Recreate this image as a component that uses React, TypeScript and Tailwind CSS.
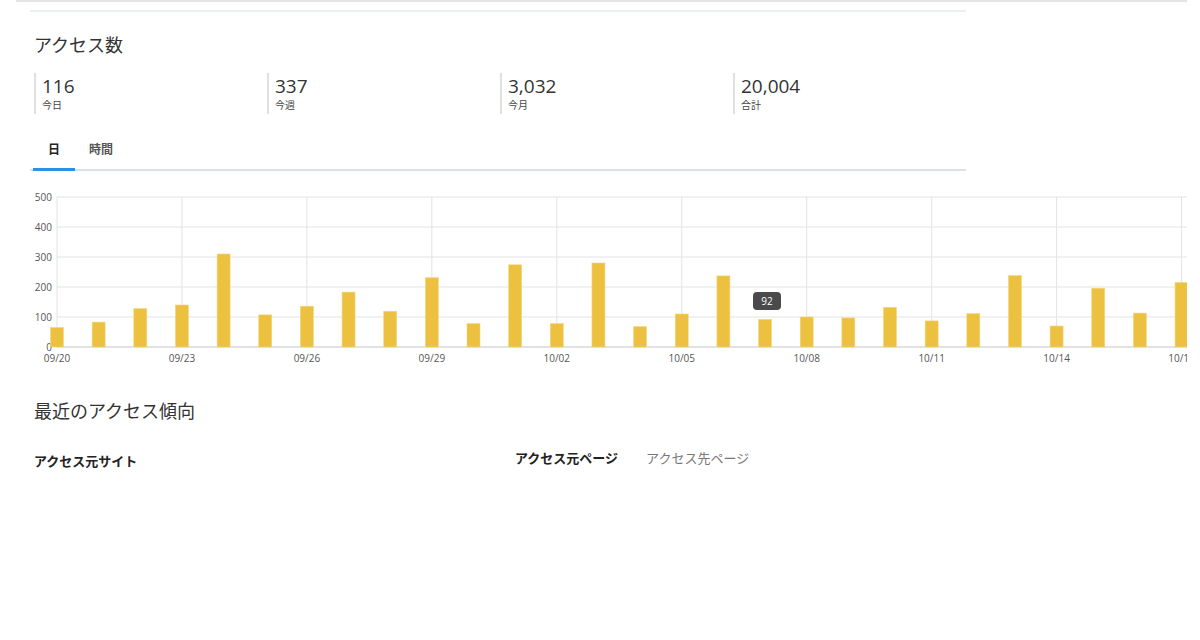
import React from "react";

const vals = [65,83,128,140,310,107,136,183,119,231,78,274,78,280,68,110,237,92,100,97,132,87,111,238,70,196,113,215];
const labels = ["09/20","09/23","09/26","09/29","10/02","10/05","10/08","10/11","10/14","10/17"];
const X0 = 27;
const DX = 41.65;
const Y0 = 158;

function Chart() {
  return (
    <svg width={1157} height={180} className="block" style={{ fontFamily: '"Open Sans","Liberation Sans",sans-serif' }}>
      {[0, 1, 2, 3, 4, 5].map((i) => (
        <line key={i} x1={X0} x2={1157} y1={Y0 - i * 30} y2={Y0 - i * 30} stroke={i === 0 ? "#d9d9d9" : "#ececec"} strokeWidth={1.5} />
      ))}
      {labels.map((_, i) => (
        <line key={i} x1={X0 + i * 3 * DX} x2={X0 + i * 3 * DX} y1={Y0 - 150} y2={Y0} stroke="#e3e3e3" strokeWidth={1} />
      ))}
      {[0, 100, 200, 300, 400, 500].map((v, i) => (
        <text key={v} x={22} y={Y0 - i * 30 + 4} fontSize={10} fill="#555" textAnchor="end">{v}</text>
      ))}
      {vals.map((v, i) => (
        <rect key={i} x={X0 + i * DX - 6.5} y={Y0 - v * 0.3} width={13} height={v * 0.3} fill="#ecc13f" stroke="#f3d77e" strokeWidth={0.6} />
      ))}
      {labels.map((l, i) => (
        <text key={l} x={X0 + i * 3 * DX} y={Y0 + 15} fontSize={10} fill="#555" textAnchor="middle">{l}</text>
      ))}
      <rect x={723} y={103} width={28} height={18} rx={4} fill="#4a4a4a" />
      <text x={737} y={116} fontSize={10} fill="#fff" textAnchor="middle">92</text>
    </svg>
  );
}

export default function App() {
  const stats = [["116", "今日"], ["337", "今週"], ["3,032", "今月"], ["20,004", "合計"]];
  return (
    <div className="relative w-[1200px] h-[640px] overflow-hidden bg-white text-[#333]" style={{ fontFamily: '"Open Sans","Noto Sans CJK JP",sans-serif' }}>
      <div className="ml-[16px] w-[1171px] h-[2px] bg-[#e4e4e4]" />
      <div className="pl-[30px]">
        <div className="mt-[8px] w-[936px] h-[2px] bg-[#edf0f2]" />
        <h2 className="ml-[4px] mt-[20px] text-[18px] leading-[26px] text-[#333]">アクセス数</h2>
        <div className="ml-[4px] mt-[15px] grid grid-cols-4 w-[932px]">
          {stats.map(([n, l]) => (
            <div key={l} className="border-l-2 border-[#e0e0e0] pl-[6px] h-[41px]">
              <div className="text-[19px] leading-[26px] text-[#333]">{n}</div>
              <div className="text-[10px] leading-[13px] text-[#444]">{l}</div>
            </div>
          ))}
        </div>
        <div className="mt-[27px] w-[936px] flex border-b-2 border-[#dde1e5] text-[12px] font-bold">
          <div className="ml-[3px] w-[42px] text-center pb-[9px] border-b-[3px] border-[#2f8fe0] -mb-[2px] text-[#222]">日</div>
          <div className="ml-[14px] pb-[9px] text-[#555]">時間</div>
        </div>
        <div className="mt-[18px]">
          <Chart />
        </div>
        <h2 className="ml-[4px] mt-[29px] text-[18px] leading-[26px] text-[#333]">最近のアクセス傾向</h2>
        <div className="ml-[4px] mt-[25px] flex text-[13px]">
          <div className="w-[481px] font-bold pt-[3px] text-[#222]">アクセス元サイト</div>
          <div className="font-bold text-[#222]">アクセス元ページ</div>
          <div className="ml-[28px] text-[#777]">アクセス先ページ</div>
        </div>
      </div>
    </div>
  );
}
